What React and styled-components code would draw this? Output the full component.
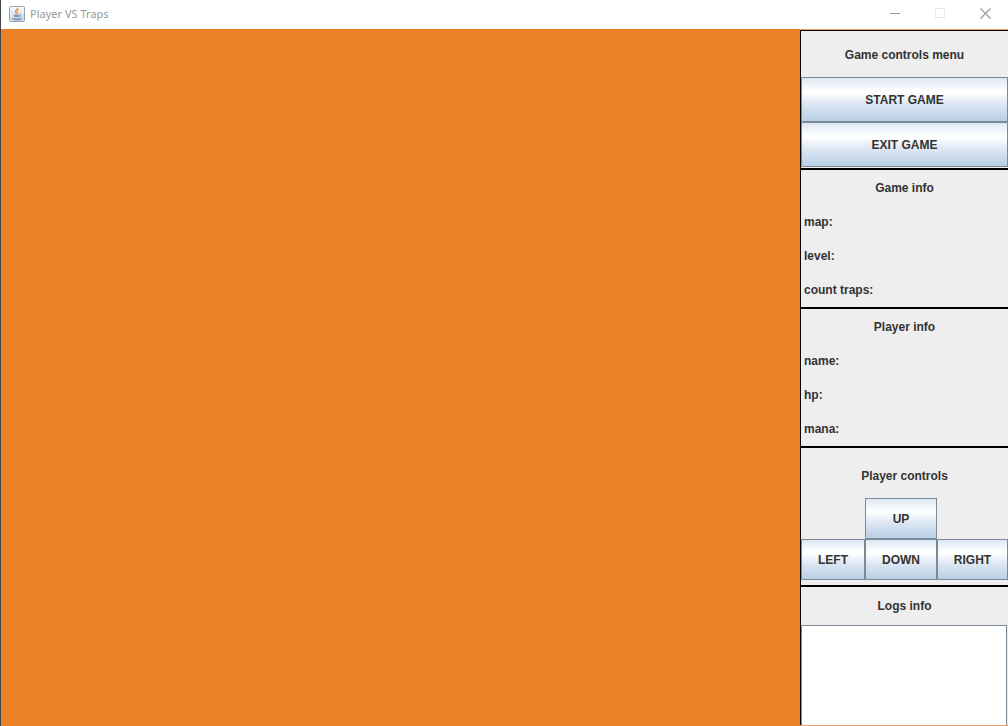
import React from "react";
import styled, { createGlobalStyle } from "styled-components";

const GlobalStyle = createGlobalStyle`
  * { box-sizing: border-box; }
  body { margin: 0; background: #fff; overflow: hidden; }
`;

const Window = styled.div`
  display: flex;
  flex-direction: column;
  height: 100vh;
  border-left: 1px solid #444546;
  font: bold 12px/16px "Liberation Sans", Arial, sans-serif;
  color: #333;
`;

const TitleBar = styled.header`
  display: flex;
  align-items: center;
  flex: none;
  height: 29px;
  padding: 0 0 2px 8px;
  background: #fff;
`;

const AppTitle = styled.h1`
  flex: 1;
  margin: 0 0 0 5px;
  font: 400 11px/16px "Noto Sans", "Open Sans", sans-serif;
  color: #999;
`;

const WindowButton = styled.button`
  display: flex;
  align-items: center;
  justify-content: center;
  width: 45px;
  height: 27px;
  padding: 0;
  border: 0;
  background: transparent;
  color: ${(p) => (p.disabled ? "#e6e6e6" : "#999")};
`;

const Body = styled.div`
  display: flex;
  flex: 1;
  min-height: 0;
  padding: 1px 0;
  background: #f0a062;
`;

const GameField = styled.main`
  flex: 1;
  margin: -1px 0;
  background: #ec8024;
`;

const Sidebar = styled.aside`
  display: grid;
  grid-template-rows: repeat(5, minmax(0, 1fr));
  width: 208px;
  background: #eee;
  border-left: 1px solid #000;
`;

const Section = styled.section`
  display: flex;
  flex-direction: column;
  min-height: 0;
  padding: ${(p) => p.$pad || 0}px 0;
  border-top: 1px solid #000;
  border-bottom: ${(p) => (p.$open ? 0 : 1)}px solid #000;
`;

const InfoPanel = styled(Section)`
  padding-top: 1px;
`;

const Heading = styled.h2`
  display: flex;
  align-items: center;
  justify-content: center;
  flex: ${(p) => (p.$height ? "none" : "1")};
  height: ${(p) => (p.$height ? `${p.$height}px` : "auto")};
  margin: 0;
  font: inherit;
`;

const InfoList = styled.ul`
  display: flex;
  flex-direction: column;
  flex: 3;
  margin: 0;
  padding: 0;
  list-style: none;
`;

const InfoRow = styled.li`
  display: flex;
  align-items: center;
  flex: 1;
  padding-left: 3px;
`;

const MetalButton = styled.button`
  flex: 1;
  padding: 0;
  border: 1px solid #7a8a99;
  border-radius: 0;
  background: linear-gradient(#dde8f3 0%, #fff 30%, #fff 34%, #dbe6f2 62%, #b8cfe5 100%);
  color: inherit;
  font: inherit;
`;

const Pad = styled.div`
  display: grid;
  grid-template-columns: 64fr 72fr 71fr;
  grid-template-rows: 1fr 1fr;
  grid-template-areas:
    ". up ."
    "left down right";
  flex: none;
  height: 82px;
`;

const PadButton = styled(MetalButton)`
  grid-area: ${(p) => p.$area};
`;

const LogArea = styled.textarea`
  flex: 1;
  width: calc(100% - 1px);
  margin: 0;
  padding: 2px;
  border: 1px solid #7a8a99;
  border-bottom: 0;
  border-radius: 0;
  background: #fff;
  color: inherit;
  font: inherit;
  resize: none;
  outline: none;
`;

const JavaIcon = () => (
  <svg width="16" height="16" viewBox="0 0 16 16" aria-hidden="true">
    <defs>
      <linearGradient id="tile" x1="0" y1="0" x2="0" y2="1">
        <stop offset="0" stopColor="#fafbfc" />
        <stop offset="1" stopColor="#c7d3de" />
      </linearGradient>
    </defs>
    <rect x="0.5" y="0.5" width="15" height="15" rx="1" fill="url(#tile)" stroke="#95a5b4" />
    <path d="M8.7 1.8c.7 1.5-2.7 2.4-2.1 4 .2.7 1 1.2 1 2" fill="none" stroke="#e98b38" strokeWidth="1.3" />
    <path d="M10 4.2C8.5 4.8 7.7 5.5 8.4 6.3c.5.6.3 1-.1 1.5" fill="none" stroke="#eda15e" />
    <path d="M4.4 8.4h6l-.6 2.8H5.2z" fill="#8aa3bc" />
    <path d="M10.3 8.8c2.4-.5 2.3 1.5-.5 1.9M5 9.8h4.7" fill="none" stroke="#7391b0" strokeWidth="0.9" />
    <path d="M3.2 12.2c1.7 1.2 7.4 1.2 9.3 0M4.5 13.6c2.4.4 5.1.4 7.1-.1" fill="none" stroke="#6f8eae" />
  </svg>
);

const InfoSection = ({ title, rows }) => (
  <InfoPanel>
    <Heading>{title}</Heading>
    <InfoList>
      {rows.map((row) => (
        <InfoRow key={row}>{row}:</InfoRow>
      ))}
    </InfoList>
  </InfoPanel>
);

export default function App() {
  return (
    <>
      <GlobalStyle />
      <Window>
        <TitleBar>
          <JavaIcon />
          <AppTitle>Player VS Traps</AppTitle>
          <WindowButton aria-label="Minimize">
            <svg width="11" height="11" stroke="currentColor"><path d="M0 5.5h10" /></svg>
          </WindowButton>
          <WindowButton aria-label="Maximize" disabled>
            <svg width="11" height="11" fill="none" stroke="currentColor"><path d="M.5.5h9v9h-9z" /></svg>
          </WindowButton>
          <WindowButton aria-label="Close">
            <svg width="11" height="11" stroke="currentColor" strokeWidth="1.2"><path d="M.5.5l10 10M10.5.5l-10 10" /></svg>
          </WindowButton>
        </TitleBar>
        <Body>
          <GameField aria-label="Game field" />
          <Sidebar>
            <Section $pad={1}>
              <Heading $height={45}>Game controls menu</Heading>
              <MetalButton>START GAME</MetalButton>
              <MetalButton>EXIT GAME</MetalButton>
            </Section>
            <InfoSection title="Game info" rows={["map", "level", "count traps"]} />
            <InfoSection title="Player info" rows={["name", "hp", "mana"]} />
            <Section $pad={5}>
              <Heading>Player controls</Heading>
              <Pad>
                <PadButton $area="up">UP</PadButton>
                <PadButton $area="left">LEFT</PadButton>
                <PadButton $area="down">DOWN</PadButton>
                <PadButton $area="right">RIGHT</PadButton>
              </Pad>
            </Section>
            <Section $open>
              <Heading $height={38}>Logs info</Heading>
              <LogArea aria-label="Logs info" readOnly />
            </Section>
          </Sidebar>
        </Body>
      </Window>
    </>
  );
}
